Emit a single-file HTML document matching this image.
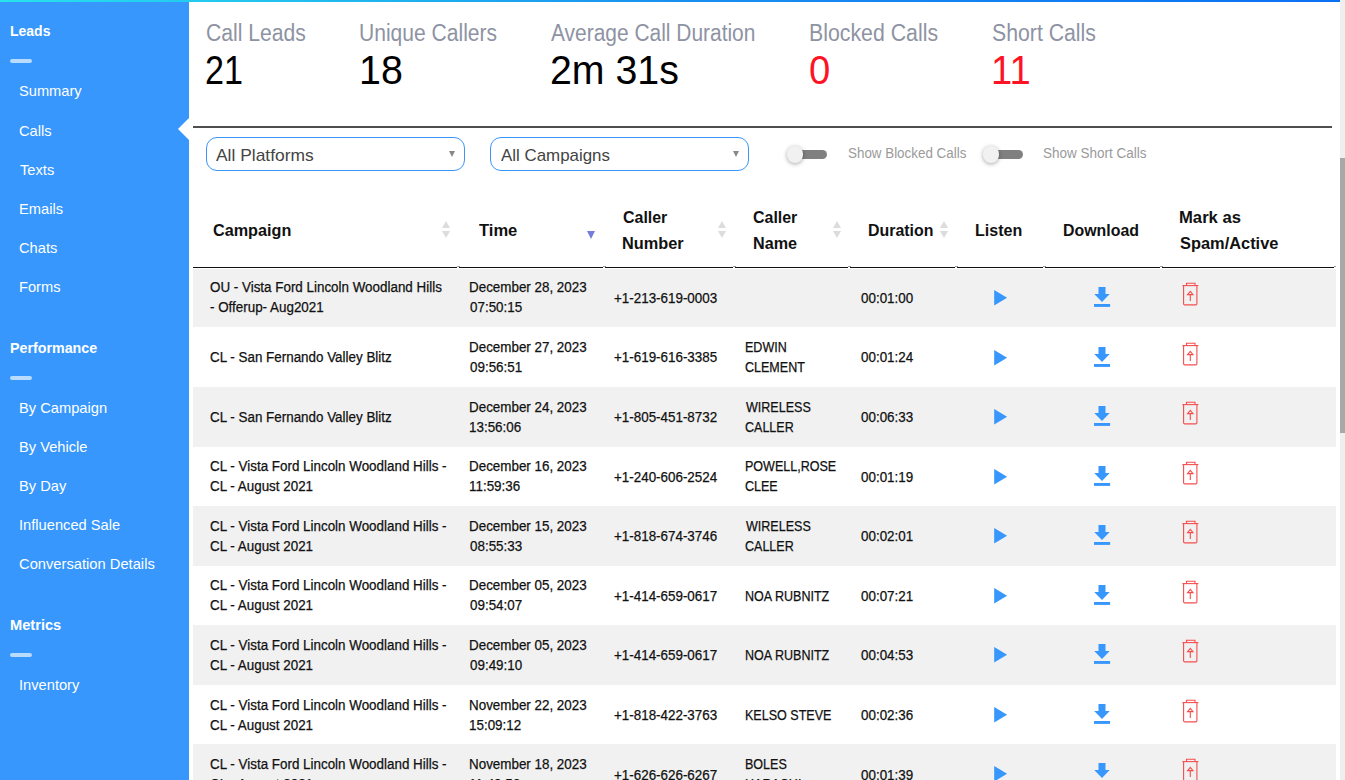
<!DOCTYPE html>
<html><head><meta charset="utf-8"><style>
*{margin:0;padding:0;box-sizing:border-box}
html,body{width:1345px;height:780px;overflow:hidden;background:#fff;font-family:"Liberation Sans",sans-serif}
.t{position:absolute;white-space:nowrap;transform-origin:0 0}
.bd{-webkit-text-stroke:0.25px #111}
.topbar{position:absolute;left:0;top:0;width:1340px;height:2px;background:linear-gradient(to right,#28e2ed,#1890f0 50%,#0b70f3)}
.scroll{position:absolute;left:1340px;top:0;width:5px;height:780px;background:#efefef}
.thumb{position:absolute;left:1340px;top:158px;width:5px;height:275px;background:#a8a8a8}
.sidebar{position:absolute;left:0;top:2px;width:189px;height:778px;background:#3797fd}
.dv{position:absolute;left:10px;width:22px;height:4px;border-radius:2px;background:rgba(255,255,255,.65)}
.notch{position:absolute;left:178px;top:118px;width:0;height:0;border-top:11px solid transparent;border-bottom:11px solid transparent;border-right:11px solid #fff}
.hr{position:absolute;left:193px;top:126px;width:1139px;height:2px;background:#4f4f4f}
.sel{position:absolute;top:137px;width:259px;height:34px;border:1px solid #3b95f8;border-radius:11px}
.sel .arr{position:absolute;right:9px;top:13px;width:0;height:0;border-left:3.5px solid transparent;border-right:3.5px solid transparent;border-top:6px solid #888}
.tg{position:absolute;top:146px;width:42px;height:17px}
.tg .track{position:absolute;left:4px;top:4px;width:37px;height:9px;border-radius:4.5px;background:#808080}
.tg .knob{position:absolute;left:0.5px;top:0;width:16.5px;height:16.5px;border-radius:50%;background:#f1f1f1;box-shadow:0 1px 4px rgba(0,0,0,.35)}
.hline{position:absolute;left:193px;top:267px;width:1143px;height:1px;background:#111}
.sort{position:absolute;top:221px;width:9px;height:18px}
.sort i{position:absolute;left:0;width:0;height:0;border-left:4.5px solid transparent;border-right:4.5px solid transparent}
.sort .up{top:0;border-bottom:7.5px solid #dcdcdc}
.sort .dn{top:10px;border-top:7px solid #dcdcdc}
.sort .dn.act{border-top-color:#767bdc;border-left-width:4.8px;border-right-width:4.8px;border-top-width:8px;top:9.5px;left:-0.3px}
.tr{position:absolute;left:193px;width:1143px;background:#f1f1f1}
.ic{position:absolute;line-height:0}
.ic svg{display:block}
</style></head><body>
<div class="topbar"></div>
<div class="sidebar"></div>
<div class="dv" style="top:59px"></div><div class="dv" style="top:376px"></div><div class="dv" style="top:653px"></div>
<div class="notch"></div>
<div class="hr"></div>
<div class="sel" style="left:206px"><span class="arr"></span></div>
<div class="sel" style="left:490px"><span class="arr"></span></div>
<div class="tg" style="left:786px"><div class="track"></div><div class="knob"></div></div>
<div class="tg" style="left:982px"><div class="track"></div><div class="knob"></div></div>
<div class="sort" style="left:441.5px"><i class="up"></i><i class="dn"></i></div>
<div class="sort" style="left:717.5px"><i class="up"></i><i class="dn"></i></div>
<div class="sort" style="left:832.5px"><i class="up"></i><i class="dn"></i></div>
<div class="sort" style="left:939.5px"><i class="up"></i><i class="dn"></i></div>
<div class="sort" style="left:587.5px"><i class="dn act"></i></div>
<div class="hline"></div>
<div class="tr" style="top:269.0px;height:58.0px"></div>
<div class="tr" style="top:387.0px;height:59.5px"></div>
<div class="tr" style="top:506.0px;height:59.5px"></div>
<div class="tr" style="top:625.0px;height:59.5px"></div>
<div class="tr" style="top:744.0px;height:59.5px"></div>
<div style="position:absolute;left:456.5px;top:266px;width:3px;height:1px;background:#9a9a9a"></div><div style="position:absolute;left:457.0px;top:267px;width:2px;height:1px;background:#fff"></div>
<div style="position:absolute;left:602.5px;top:266px;width:3px;height:1px;background:#9a9a9a"></div><div style="position:absolute;left:603.0px;top:267px;width:2px;height:1px;background:#fff"></div>
<div style="position:absolute;left:732.5px;top:266px;width:3px;height:1px;background:#9a9a9a"></div><div style="position:absolute;left:733.0px;top:267px;width:2px;height:1px;background:#fff"></div>
<div style="position:absolute;left:847.5px;top:266px;width:3px;height:1px;background:#9a9a9a"></div><div style="position:absolute;left:848.0px;top:267px;width:2px;height:1px;background:#fff"></div>
<div style="position:absolute;left:954.5px;top:266px;width:3px;height:1px;background:#9a9a9a"></div><div style="position:absolute;left:955.0px;top:267px;width:2px;height:1px;background:#fff"></div>
<div style="position:absolute;left:1042.5px;top:266px;width:3px;height:1px;background:#9a9a9a"></div><div style="position:absolute;left:1043.0px;top:267px;width:2px;height:1px;background:#fff"></div>
<div style="position:absolute;left:1159.5px;top:266px;width:3px;height:1px;background:#9a9a9a"></div><div style="position:absolute;left:1160.0px;top:267px;width:2px;height:1px;background:#fff"></div>
<div style="position:absolute;left:1334px;top:266px;width:2px;height:1px;background:#9a9a9a"></div><div style="position:absolute;left:1334px;top:267px;width:2px;height:1px;background:#fff"></div>
<div class="ic" style="left:994px;top:290.1px"><svg width="14" height="16" viewBox="0 0 14 16"><path d="M0.2 0 L13.1 7.7 L0.2 15.4Z" fill="#3797fd"/></svg></div>
<div class="ic" style="left:1093.5px;top:287.2px"><svg width="17" height="20" viewBox="0 0 17 20"><path d="M4.5 0h7v7.1h4.2L8 15 0.2 7.1H4.5z" fill="#3797fd"/><rect x="0" y="17" width="16.1" height="2.9" fill="#3797fd"/></svg></div>
<div class="ic" style="left:1182px;top:282.3px"><svg width="18" height="24" viewBox="0 0 18 24"><g fill="none" stroke="#f54d4d" stroke-width="1.1"><path d="M0.4 3.6h16"/><path d="M4.5 3.6V1.3h8.5v2.3"/><path d="M1.6 3.6V21.8q0 1.1 1.1 1.1h11.1q1.1 0 1.1-1.1V3.6"/><path d="M8.3 19V12.6M5.6 12.6L8.3 9.3l2.7 3.3z"/></g></svg></div>
<div class="ic" style="left:994px;top:349.6px"><svg width="14" height="16" viewBox="0 0 14 16"><path d="M0.2 0 L13.1 7.7 L0.2 15.4Z" fill="#3797fd"/></svg></div>
<div class="ic" style="left:1093.5px;top:346.7px"><svg width="17" height="20" viewBox="0 0 17 20"><path d="M4.5 0h7v7.1h4.2L8 15 0.2 7.1H4.5z" fill="#3797fd"/><rect x="0" y="17" width="16.1" height="2.9" fill="#3797fd"/></svg></div>
<div class="ic" style="left:1182px;top:341.8px"><svg width="18" height="24" viewBox="0 0 18 24"><g fill="none" stroke="#f54d4d" stroke-width="1.1"><path d="M0.4 3.6h16"/><path d="M4.5 3.6V1.3h8.5v2.3"/><path d="M1.6 3.6V21.8q0 1.1 1.1 1.1h11.1q1.1 0 1.1-1.1V3.6"/><path d="M8.3 19V12.6M5.6 12.6L8.3 9.3l2.7 3.3z"/></g></svg></div>
<div class="ic" style="left:994px;top:409.1px"><svg width="14" height="16" viewBox="0 0 14 16"><path d="M0.2 0 L13.1 7.7 L0.2 15.4Z" fill="#3797fd"/></svg></div>
<div class="ic" style="left:1093.5px;top:406.2px"><svg width="17" height="20" viewBox="0 0 17 20"><path d="M4.5 0h7v7.1h4.2L8 15 0.2 7.1H4.5z" fill="#3797fd"/><rect x="0" y="17" width="16.1" height="2.9" fill="#3797fd"/></svg></div>
<div class="ic" style="left:1182px;top:401.3px"><svg width="18" height="24" viewBox="0 0 18 24"><g fill="none" stroke="#f54d4d" stroke-width="1.1"><path d="M0.4 3.6h16"/><path d="M4.5 3.6V1.3h8.5v2.3"/><path d="M1.6 3.6V21.8q0 1.1 1.1 1.1h11.1q1.1 0 1.1-1.1V3.6"/><path d="M8.3 19V12.6M5.6 12.6L8.3 9.3l2.7 3.3z"/></g></svg></div>
<div class="ic" style="left:994px;top:468.6px"><svg width="14" height="16" viewBox="0 0 14 16"><path d="M0.2 0 L13.1 7.7 L0.2 15.4Z" fill="#3797fd"/></svg></div>
<div class="ic" style="left:1093.5px;top:465.7px"><svg width="17" height="20" viewBox="0 0 17 20"><path d="M4.5 0h7v7.1h4.2L8 15 0.2 7.1H4.5z" fill="#3797fd"/><rect x="0" y="17" width="16.1" height="2.9" fill="#3797fd"/></svg></div>
<div class="ic" style="left:1182px;top:460.8px"><svg width="18" height="24" viewBox="0 0 18 24"><g fill="none" stroke="#f54d4d" stroke-width="1.1"><path d="M0.4 3.6h16"/><path d="M4.5 3.6V1.3h8.5v2.3"/><path d="M1.6 3.6V21.8q0 1.1 1.1 1.1h11.1q1.1 0 1.1-1.1V3.6"/><path d="M8.3 19V12.6M5.6 12.6L8.3 9.3l2.7 3.3z"/></g></svg></div>
<div class="ic" style="left:994px;top:528.1px"><svg width="14" height="16" viewBox="0 0 14 16"><path d="M0.2 0 L13.1 7.7 L0.2 15.4Z" fill="#3797fd"/></svg></div>
<div class="ic" style="left:1093.5px;top:525.2px"><svg width="17" height="20" viewBox="0 0 17 20"><path d="M4.5 0h7v7.1h4.2L8 15 0.2 7.1H4.5z" fill="#3797fd"/><rect x="0" y="17" width="16.1" height="2.9" fill="#3797fd"/></svg></div>
<div class="ic" style="left:1182px;top:520.3px"><svg width="18" height="24" viewBox="0 0 18 24"><g fill="none" stroke="#f54d4d" stroke-width="1.1"><path d="M0.4 3.6h16"/><path d="M4.5 3.6V1.3h8.5v2.3"/><path d="M1.6 3.6V21.8q0 1.1 1.1 1.1h11.1q1.1 0 1.1-1.1V3.6"/><path d="M8.3 19V12.6M5.6 12.6L8.3 9.3l2.7 3.3z"/></g></svg></div>
<div class="ic" style="left:994px;top:587.6px"><svg width="14" height="16" viewBox="0 0 14 16"><path d="M0.2 0 L13.1 7.7 L0.2 15.4Z" fill="#3797fd"/></svg></div>
<div class="ic" style="left:1093.5px;top:584.7px"><svg width="17" height="20" viewBox="0 0 17 20"><path d="M4.5 0h7v7.1h4.2L8 15 0.2 7.1H4.5z" fill="#3797fd"/><rect x="0" y="17" width="16.1" height="2.9" fill="#3797fd"/></svg></div>
<div class="ic" style="left:1182px;top:579.8px"><svg width="18" height="24" viewBox="0 0 18 24"><g fill="none" stroke="#f54d4d" stroke-width="1.1"><path d="M0.4 3.6h16"/><path d="M4.5 3.6V1.3h8.5v2.3"/><path d="M1.6 3.6V21.8q0 1.1 1.1 1.1h11.1q1.1 0 1.1-1.1V3.6"/><path d="M8.3 19V12.6M5.6 12.6L8.3 9.3l2.7 3.3z"/></g></svg></div>
<div class="ic" style="left:994px;top:647.1px"><svg width="14" height="16" viewBox="0 0 14 16"><path d="M0.2 0 L13.1 7.7 L0.2 15.4Z" fill="#3797fd"/></svg></div>
<div class="ic" style="left:1093.5px;top:644.2px"><svg width="17" height="20" viewBox="0 0 17 20"><path d="M4.5 0h7v7.1h4.2L8 15 0.2 7.1H4.5z" fill="#3797fd"/><rect x="0" y="17" width="16.1" height="2.9" fill="#3797fd"/></svg></div>
<div class="ic" style="left:1182px;top:639.3px"><svg width="18" height="24" viewBox="0 0 18 24"><g fill="none" stroke="#f54d4d" stroke-width="1.1"><path d="M0.4 3.6h16"/><path d="M4.5 3.6V1.3h8.5v2.3"/><path d="M1.6 3.6V21.8q0 1.1 1.1 1.1h11.1q1.1 0 1.1-1.1V3.6"/><path d="M8.3 19V12.6M5.6 12.6L8.3 9.3l2.7 3.3z"/></g></svg></div>
<div class="ic" style="left:994px;top:706.6px"><svg width="14" height="16" viewBox="0 0 14 16"><path d="M0.2 0 L13.1 7.7 L0.2 15.4Z" fill="#3797fd"/></svg></div>
<div class="ic" style="left:1093.5px;top:703.7px"><svg width="17" height="20" viewBox="0 0 17 20"><path d="M4.5 0h7v7.1h4.2L8 15 0.2 7.1H4.5z" fill="#3797fd"/><rect x="0" y="17" width="16.1" height="2.9" fill="#3797fd"/></svg></div>
<div class="ic" style="left:1182px;top:698.8px"><svg width="18" height="24" viewBox="0 0 18 24"><g fill="none" stroke="#f54d4d" stroke-width="1.1"><path d="M0.4 3.6h16"/><path d="M4.5 3.6V1.3h8.5v2.3"/><path d="M1.6 3.6V21.8q0 1.1 1.1 1.1h11.1q1.1 0 1.1-1.1V3.6"/><path d="M8.3 19V12.6M5.6 12.6L8.3 9.3l2.7 3.3z"/></g></svg></div>
<div class="ic" style="left:994px;top:766.1px"><svg width="14" height="16" viewBox="0 0 14 16"><path d="M0.2 0 L13.1 7.7 L0.2 15.4Z" fill="#3797fd"/></svg></div>
<div class="ic" style="left:1093.5px;top:763.2px"><svg width="17" height="20" viewBox="0 0 17 20"><path d="M4.5 0h7v7.1h4.2L8 15 0.2 7.1H4.5z" fill="#3797fd"/><rect x="0" y="17" width="16.1" height="2.9" fill="#3797fd"/></svg></div>
<div class="ic" style="left:1182px;top:758.3px"><svg width="18" height="24" viewBox="0 0 18 24"><g fill="none" stroke="#f54d4d" stroke-width="1.1"><path d="M0.4 3.6h16"/><path d="M4.5 3.6V1.3h8.5v2.3"/><path d="M1.6 3.6V21.8q0 1.1 1.1 1.1h11.1q1.1 0 1.1-1.1V3.6"/><path d="M8.3 19V12.6M5.6 12.6L8.3 9.3l2.7 3.3z"/></g></svg></div>
<div class="t " style="left:9.63px;top:23px;font-size:15px;line-height:15px;font-weight:bold;color:#fff;transform:scaleX(0.9329)">Leads</div>
<div class="t " style="left:19.44px;top:83px;font-size:15px;line-height:15px;color:#fff;transform:scaleX(0.9764)">Summary</div>
<div class="t " style="left:19.21px;top:123px;font-size:15px;line-height:15px;color:#fff;transform:scaleX(0.9780)">Calls</div>
<div class="t " style="left:19.67px;top:162px;font-size:15px;line-height:15px;color:#fff;transform:scaleX(0.9780)">Texts</div>
<div class="t " style="left:18.75px;top:201px;font-size:15px;line-height:15px;color:#fff;transform:scaleX(0.9780)">Emails</div>
<div class="t " style="left:19.21px;top:240px;font-size:15px;line-height:15px;color:#fff;transform:scaleX(0.9780)">Chats</div>
<div class="t " style="left:18.75px;top:279px;font-size:15px;line-height:15px;color:#fff;transform:scaleX(0.9780)">Forms</div>
<div class="t " style="left:9.61px;top:340px;font-size:15px;line-height:15px;font-weight:bold;color:#fff;transform:scaleX(0.9503)">Performance</div>
<div class="t " style="left:18.75px;top:400px;font-size:15px;line-height:15px;color:#fff;transform:scaleX(0.9780)">By Campaign</div>
<div class="t " style="left:18.75px;top:439px;font-size:15px;line-height:15px;color:#fff;transform:scaleX(0.9780)">By Vehicle</div>
<div class="t " style="left:18.75px;top:478px;font-size:15px;line-height:15px;color:#fff;transform:scaleX(0.9780)">By Day</div>
<div class="t " style="left:18.75px;top:517px;font-size:15px;line-height:15px;color:#fff;transform:scaleX(0.9780)">Influenced Sale</div>
<div class="t " style="left:19.21px;top:556px;font-size:15px;line-height:15px;color:#fff;transform:scaleX(0.9809)">Conversation Details</div>
<div class="t " style="left:9.59px;top:617px;font-size:15px;line-height:15px;font-weight:bold;color:#fff;transform:scaleX(0.9750)">Metrics</div>
<div class="t " style="left:18.75px;top:677px;font-size:15px;line-height:15px;color:#fff;transform:scaleX(0.9780)">Inventory</div>
<div class="t " style="left:205.51px;top:22px;font-size:23px;line-height:23px;color:#8e93a3;transform:scaleX(0.9188)">Call Leads</div>
<div class="t " style="left:205.40px;top:50px;font-size:40px;line-height:40px;color:#000;transform:scaleX(0.8537)">21</div>
<div class="t " style="left:358.78px;top:22px;font-size:23px;line-height:23px;color:#8e93a3;transform:scaleX(0.9153)">Unique Callers</div>
<div class="t " style="left:358.84px;top:50px;font-size:40px;line-height:40px;color:#000;transform:scaleX(0.9834)">18</div>
<div class="t " style="left:551.10px;top:22px;font-size:23px;line-height:23px;color:#8e93a3;transform:scaleX(0.9100)">Average Call Duration</div>
<div class="t " style="left:549.76px;top:50px;font-size:40px;line-height:40px;color:#000;transform:scaleX(0.9825)">2m 31s</div>
<div class="t " style="left:808.74px;top:22px;font-size:23px;line-height:23px;color:#8e93a3;transform:scaleX(0.9260)">Blocked Calls</div>
<div class="t " style="left:809.21px;top:50px;font-size:40px;line-height:40px;color:#fc1426;transform:scaleX(0.9550)">0</div>
<div class="t " style="left:991.74px;top:22px;font-size:23px;line-height:23px;color:#8e93a3;transform:scaleX(0.9239)">Short Calls</div>
<div class="t " style="left:991.21px;top:50px;font-size:40px;line-height:40px;color:#fc1426;transform:scaleX(0.9545)">11</div>
<div class="t " style="left:216.10px;top:147px;font-size:17px;line-height:17px;color:#444;transform:scaleX(1.0245)">All Platforms</div>
<div class="t " style="left:500.70px;top:147px;font-size:17px;line-height:17px;color:#444;transform:scaleX(0.9938)">All Campaigns</div>
<div class="t " style="left:848.48px;top:146px;font-size:14px;line-height:14px;color:#9a9a9a;transform:scaleX(0.9565)">Show Blocked Calls</div>
<div class="t " style="left:1043.38px;top:146px;font-size:14px;line-height:14px;color:#9a9a9a;transform:scaleX(0.9643)">Show Short Calls</div>
<div class="t " style="left:212.79px;top:222px;font-size:17px;line-height:17px;font-weight:bold;color:#111;transform:scaleX(0.9527)">Campaign</div>
<div class="t " style="left:478.70px;top:222px;font-size:17px;line-height:17px;font-weight:bold;color:#111;transform:scaleX(0.9731)">Time</div>
<div class="t " style="left:622.90px;top:209px;font-size:17px;line-height:17px;font-weight:bold;color:#111;transform:scaleX(0.9381)">Caller</div>
<div class="t " style="left:622.38px;top:235px;font-size:17px;line-height:17px;font-weight:bold;color:#111;transform:scaleX(0.9598)">Number</div>
<div class="t " style="left:753.30px;top:209px;font-size:17px;line-height:17px;font-weight:bold;color:#111;transform:scaleX(0.9381)">Caller</div>
<div class="t " style="left:752.79px;top:235px;font-size:17px;line-height:17px;font-weight:bold;color:#111;transform:scaleX(0.9500)">Name</div>
<div class="t " style="left:868.41px;top:222px;font-size:17px;line-height:17px;font-weight:bold;color:#111;transform:scaleX(0.9353)">Duration</div>
<div class="t " style="left:975.00px;top:222px;font-size:17px;line-height:17px;font-weight:bold;color:#111;transform:scaleX(0.9444)">Listen</div>
<div class="t " style="left:1063.11px;top:222px;font-size:17px;line-height:17px;font-weight:bold;color:#111;transform:scaleX(0.9359)">Download</div>
<div class="t " style="left:1179.46px;top:209px;font-size:17px;line-height:17px;font-weight:bold;color:#111;transform:scaleX(0.9794)">Mark as</div>
<div class="t " style="left:1180.24px;top:235px;font-size:17px;line-height:17px;font-weight:bold;color:#111;transform:scaleX(0.9640)">Spam/Active</div>
<div class="t bd" style="left:210.17px;top:280px;font-size:14px;line-height:14px;color:#111;transform:scaleX(0.9570)">OU - Vista Ford Lincoln Woodland Hills</div>
<div class="t bd" style="left:210.38px;top:300px;font-size:14px;line-height:14px;color:#111;transform:scaleX(0.9570)">- Offerup- Aug2021</div>
<div class="t bd" style="left:469.15px;top:280px;font-size:14px;line-height:14px;color:#111;transform:scaleX(0.9570)">December 28, 2023</div>
<div class="t bd" style="left:469.78px;top:300px;font-size:14px;line-height:14px;color:#111;transform:scaleX(0.9570)">07:50:15</div>
<div class="t bd" style="left:614.07px;top:291px;font-size:14px;line-height:14px;color:#111;transform:scaleX(0.9570)">+1-213-619-0003</div>
<div class="t bd" style="left:860.78px;top:291px;font-size:14px;line-height:14px;color:#111;transform:scaleX(0.9570)">00:01:00</div>
<div class="t bd" style="left:210.17px;top:350px;font-size:14px;line-height:14px;color:#111;transform:scaleX(0.9570)">CL - San Fernando Valley Blitz</div>
<div class="t bd" style="left:469.15px;top:340px;font-size:14px;line-height:14px;color:#111;transform:scaleX(0.9570)">December 27, 2023</div>
<div class="t bd" style="left:469.78px;top:360px;font-size:14px;line-height:14px;color:#111;transform:scaleX(0.9570)">09:56:51</div>
<div class="t bd" style="left:614.07px;top:350px;font-size:14px;line-height:14px;color:#111;transform:scaleX(0.9570)">+1-619-616-3385</div>
<div class="t bd" style="left:744.72px;top:340px;font-size:14px;line-height:14px;color:#111;transform:scaleX(0.8950)">EDWIN</div>
<div class="t bd" style="left:745.11px;top:360px;font-size:14px;line-height:14px;color:#111;transform:scaleX(0.8950)">CLEMENT</div>
<div class="t bd" style="left:860.78px;top:350px;font-size:14px;line-height:14px;color:#111;transform:scaleX(0.9570)">00:01:24</div>
<div class="t bd" style="left:210.17px;top:410px;font-size:14px;line-height:14px;color:#111;transform:scaleX(0.9570)">CL - San Fernando Valley Blitz</div>
<div class="t bd" style="left:469.15px;top:400px;font-size:14px;line-height:14px;color:#111;transform:scaleX(0.9570)">December 24, 2023</div>
<div class="t bd" style="left:469.36px;top:420px;font-size:14px;line-height:14px;color:#111;transform:scaleX(0.9570)">13:56:06</div>
<div class="t bd" style="left:614.07px;top:410px;font-size:14px;line-height:14px;color:#111;transform:scaleX(0.9570)">+1-805-451-8732</div>
<div class="t bd" style="left:745.70px;top:400px;font-size:14px;line-height:14px;color:#111;transform:scaleX(0.8950)">WIRELESS</div>
<div class="t bd" style="left:745.11px;top:420px;font-size:14px;line-height:14px;color:#111;transform:scaleX(0.8950)">CALLER</div>
<div class="t bd" style="left:860.78px;top:410px;font-size:14px;line-height:14px;color:#111;transform:scaleX(0.9570)">00:06:33</div>
<div class="t bd" style="left:210.17px;top:459px;font-size:14px;line-height:14px;color:#111;transform:scaleX(0.9570)">CL - Vista Ford Lincoln Woodland Hills -</div>
<div class="t bd" style="left:210.17px;top:479px;font-size:14px;line-height:14px;color:#111;transform:scaleX(0.9570)">CL - August 2021</div>
<div class="t bd" style="left:469.15px;top:459px;font-size:14px;line-height:14px;color:#111;transform:scaleX(0.9570)">December 16, 2023</div>
<div class="t bd" style="left:469.36px;top:479px;font-size:14px;line-height:14px;color:#111;transform:scaleX(0.9570)">11:59:36</div>
<div class="t bd" style="left:614.07px;top:470px;font-size:14px;line-height:14px;color:#111;transform:scaleX(0.9570)">+1-240-606-2524</div>
<div class="t bd" style="left:744.72px;top:459px;font-size:14px;line-height:14px;color:#111;transform:scaleX(0.8950)">POWELL,ROSE</div>
<div class="t bd" style="left:745.11px;top:479px;font-size:14px;line-height:14px;color:#111;transform:scaleX(0.8950)">CLEE</div>
<div class="t bd" style="left:860.78px;top:470px;font-size:14px;line-height:14px;color:#111;transform:scaleX(0.9570)">00:01:19</div>
<div class="t bd" style="left:210.17px;top:519px;font-size:14px;line-height:14px;color:#111;transform:scaleX(0.9570)">CL - Vista Ford Lincoln Woodland Hills -</div>
<div class="t bd" style="left:210.17px;top:539px;font-size:14px;line-height:14px;color:#111;transform:scaleX(0.9570)">CL - August 2021</div>
<div class="t bd" style="left:469.15px;top:519px;font-size:14px;line-height:14px;color:#111;transform:scaleX(0.9570)">December 15, 2023</div>
<div class="t bd" style="left:469.78px;top:539px;font-size:14px;line-height:14px;color:#111;transform:scaleX(0.9570)">08:55:33</div>
<div class="t bd" style="left:614.07px;top:529px;font-size:14px;line-height:14px;color:#111;transform:scaleX(0.9570)">+1-818-674-3746</div>
<div class="t bd" style="left:745.70px;top:519px;font-size:14px;line-height:14px;color:#111;transform:scaleX(0.8950)">WIRELESS</div>
<div class="t bd" style="left:745.11px;top:539px;font-size:14px;line-height:14px;color:#111;transform:scaleX(0.8950)">CALLER</div>
<div class="t bd" style="left:860.78px;top:529px;font-size:14px;line-height:14px;color:#111;transform:scaleX(0.9570)">00:02:01</div>
<div class="t bd" style="left:210.17px;top:578px;font-size:14px;line-height:14px;color:#111;transform:scaleX(0.9570)">CL - Vista Ford Lincoln Woodland Hills -</div>
<div class="t bd" style="left:210.17px;top:598px;font-size:14px;line-height:14px;color:#111;transform:scaleX(0.9570)">CL - August 2021</div>
<div class="t bd" style="left:469.15px;top:578px;font-size:14px;line-height:14px;color:#111;transform:scaleX(0.9570)">December 05, 2023</div>
<div class="t bd" style="left:469.78px;top:598px;font-size:14px;line-height:14px;color:#111;transform:scaleX(0.9570)">09:54:07</div>
<div class="t bd" style="left:614.07px;top:589px;font-size:14px;line-height:14px;color:#111;transform:scaleX(0.9570)">+1-414-659-0617</div>
<div class="t bd" style="left:744.72px;top:589px;font-size:14px;line-height:14px;color:#111;transform:scaleX(0.8950)">NOA RUBNITZ</div>
<div class="t bd" style="left:860.78px;top:589px;font-size:14px;line-height:14px;color:#111;transform:scaleX(0.9570)">00:07:21</div>
<div class="t bd" style="left:210.17px;top:638px;font-size:14px;line-height:14px;color:#111;transform:scaleX(0.9570)">CL - Vista Ford Lincoln Woodland Hills -</div>
<div class="t bd" style="left:210.17px;top:658px;font-size:14px;line-height:14px;color:#111;transform:scaleX(0.9570)">CL - August 2021</div>
<div class="t bd" style="left:469.15px;top:638px;font-size:14px;line-height:14px;color:#111;transform:scaleX(0.9570)">December 05, 2023</div>
<div class="t bd" style="left:469.78px;top:658px;font-size:14px;line-height:14px;color:#111;transform:scaleX(0.9570)">09:49:10</div>
<div class="t bd" style="left:614.07px;top:648px;font-size:14px;line-height:14px;color:#111;transform:scaleX(0.9570)">+1-414-659-0617</div>
<div class="t bd" style="left:744.72px;top:648px;font-size:14px;line-height:14px;color:#111;transform:scaleX(0.8950)">NOA RUBNITZ</div>
<div class="t bd" style="left:860.78px;top:648px;font-size:14px;line-height:14px;color:#111;transform:scaleX(0.9570)">00:04:53</div>
<div class="t bd" style="left:210.17px;top:698px;font-size:14px;line-height:14px;color:#111;transform:scaleX(0.9570)">CL - Vista Ford Lincoln Woodland Hills -</div>
<div class="t bd" style="left:210.17px;top:718px;font-size:14px;line-height:14px;color:#111;transform:scaleX(0.9570)">CL - August 2021</div>
<div class="t bd" style="left:469.15px;top:698px;font-size:14px;line-height:14px;color:#111;transform:scaleX(0.9570)">November 22, 2023</div>
<div class="t bd" style="left:469.36px;top:718px;font-size:14px;line-height:14px;color:#111;transform:scaleX(0.9570)">15:09:12</div>
<div class="t bd" style="left:614.07px;top:708px;font-size:14px;line-height:14px;color:#111;transform:scaleX(0.9570)">+1-818-422-3763</div>
<div class="t bd" style="left:744.72px;top:708px;font-size:14px;line-height:14px;color:#111;transform:scaleX(0.8950)">KELSO STEVE</div>
<div class="t bd" style="left:860.78px;top:708px;font-size:14px;line-height:14px;color:#111;transform:scaleX(0.9570)">00:02:36</div>
<div class="t bd" style="left:210.17px;top:757px;font-size:14px;line-height:14px;color:#111;transform:scaleX(0.9570)">CL - Vista Ford Lincoln Woodland Hills -</div>
<div class="t bd" style="left:210.17px;top:777px;font-size:14px;line-height:14px;color:#111;transform:scaleX(0.9570)">CL - August 2021</div>
<div class="t bd" style="left:469.15px;top:757px;font-size:14px;line-height:14px;color:#111;transform:scaleX(0.9570)">November 18, 2023</div>
<div class="t bd" style="left:469.36px;top:777px;font-size:14px;line-height:14px;color:#111;transform:scaleX(0.9570)">11:40:56</div>
<div class="t bd" style="left:614.07px;top:768px;font-size:14px;line-height:14px;color:#111;transform:scaleX(0.9570)">+1-626-626-6267</div>
<div class="t bd" style="left:744.72px;top:757px;font-size:14px;line-height:14px;color:#111;transform:scaleX(0.8950)">BOLES</div>
<div class="t bd" style="left:744.72px;top:777px;font-size:14px;line-height:14px;color:#111;transform:scaleX(0.8950)">HARACHI</div>
<div class="t bd" style="left:860.78px;top:768px;font-size:14px;line-height:14px;color:#111;transform:scaleX(0.9570)">00:01:39</div>
<div class="scroll"></div>
<div class="thumb"></div>
</body></html>
